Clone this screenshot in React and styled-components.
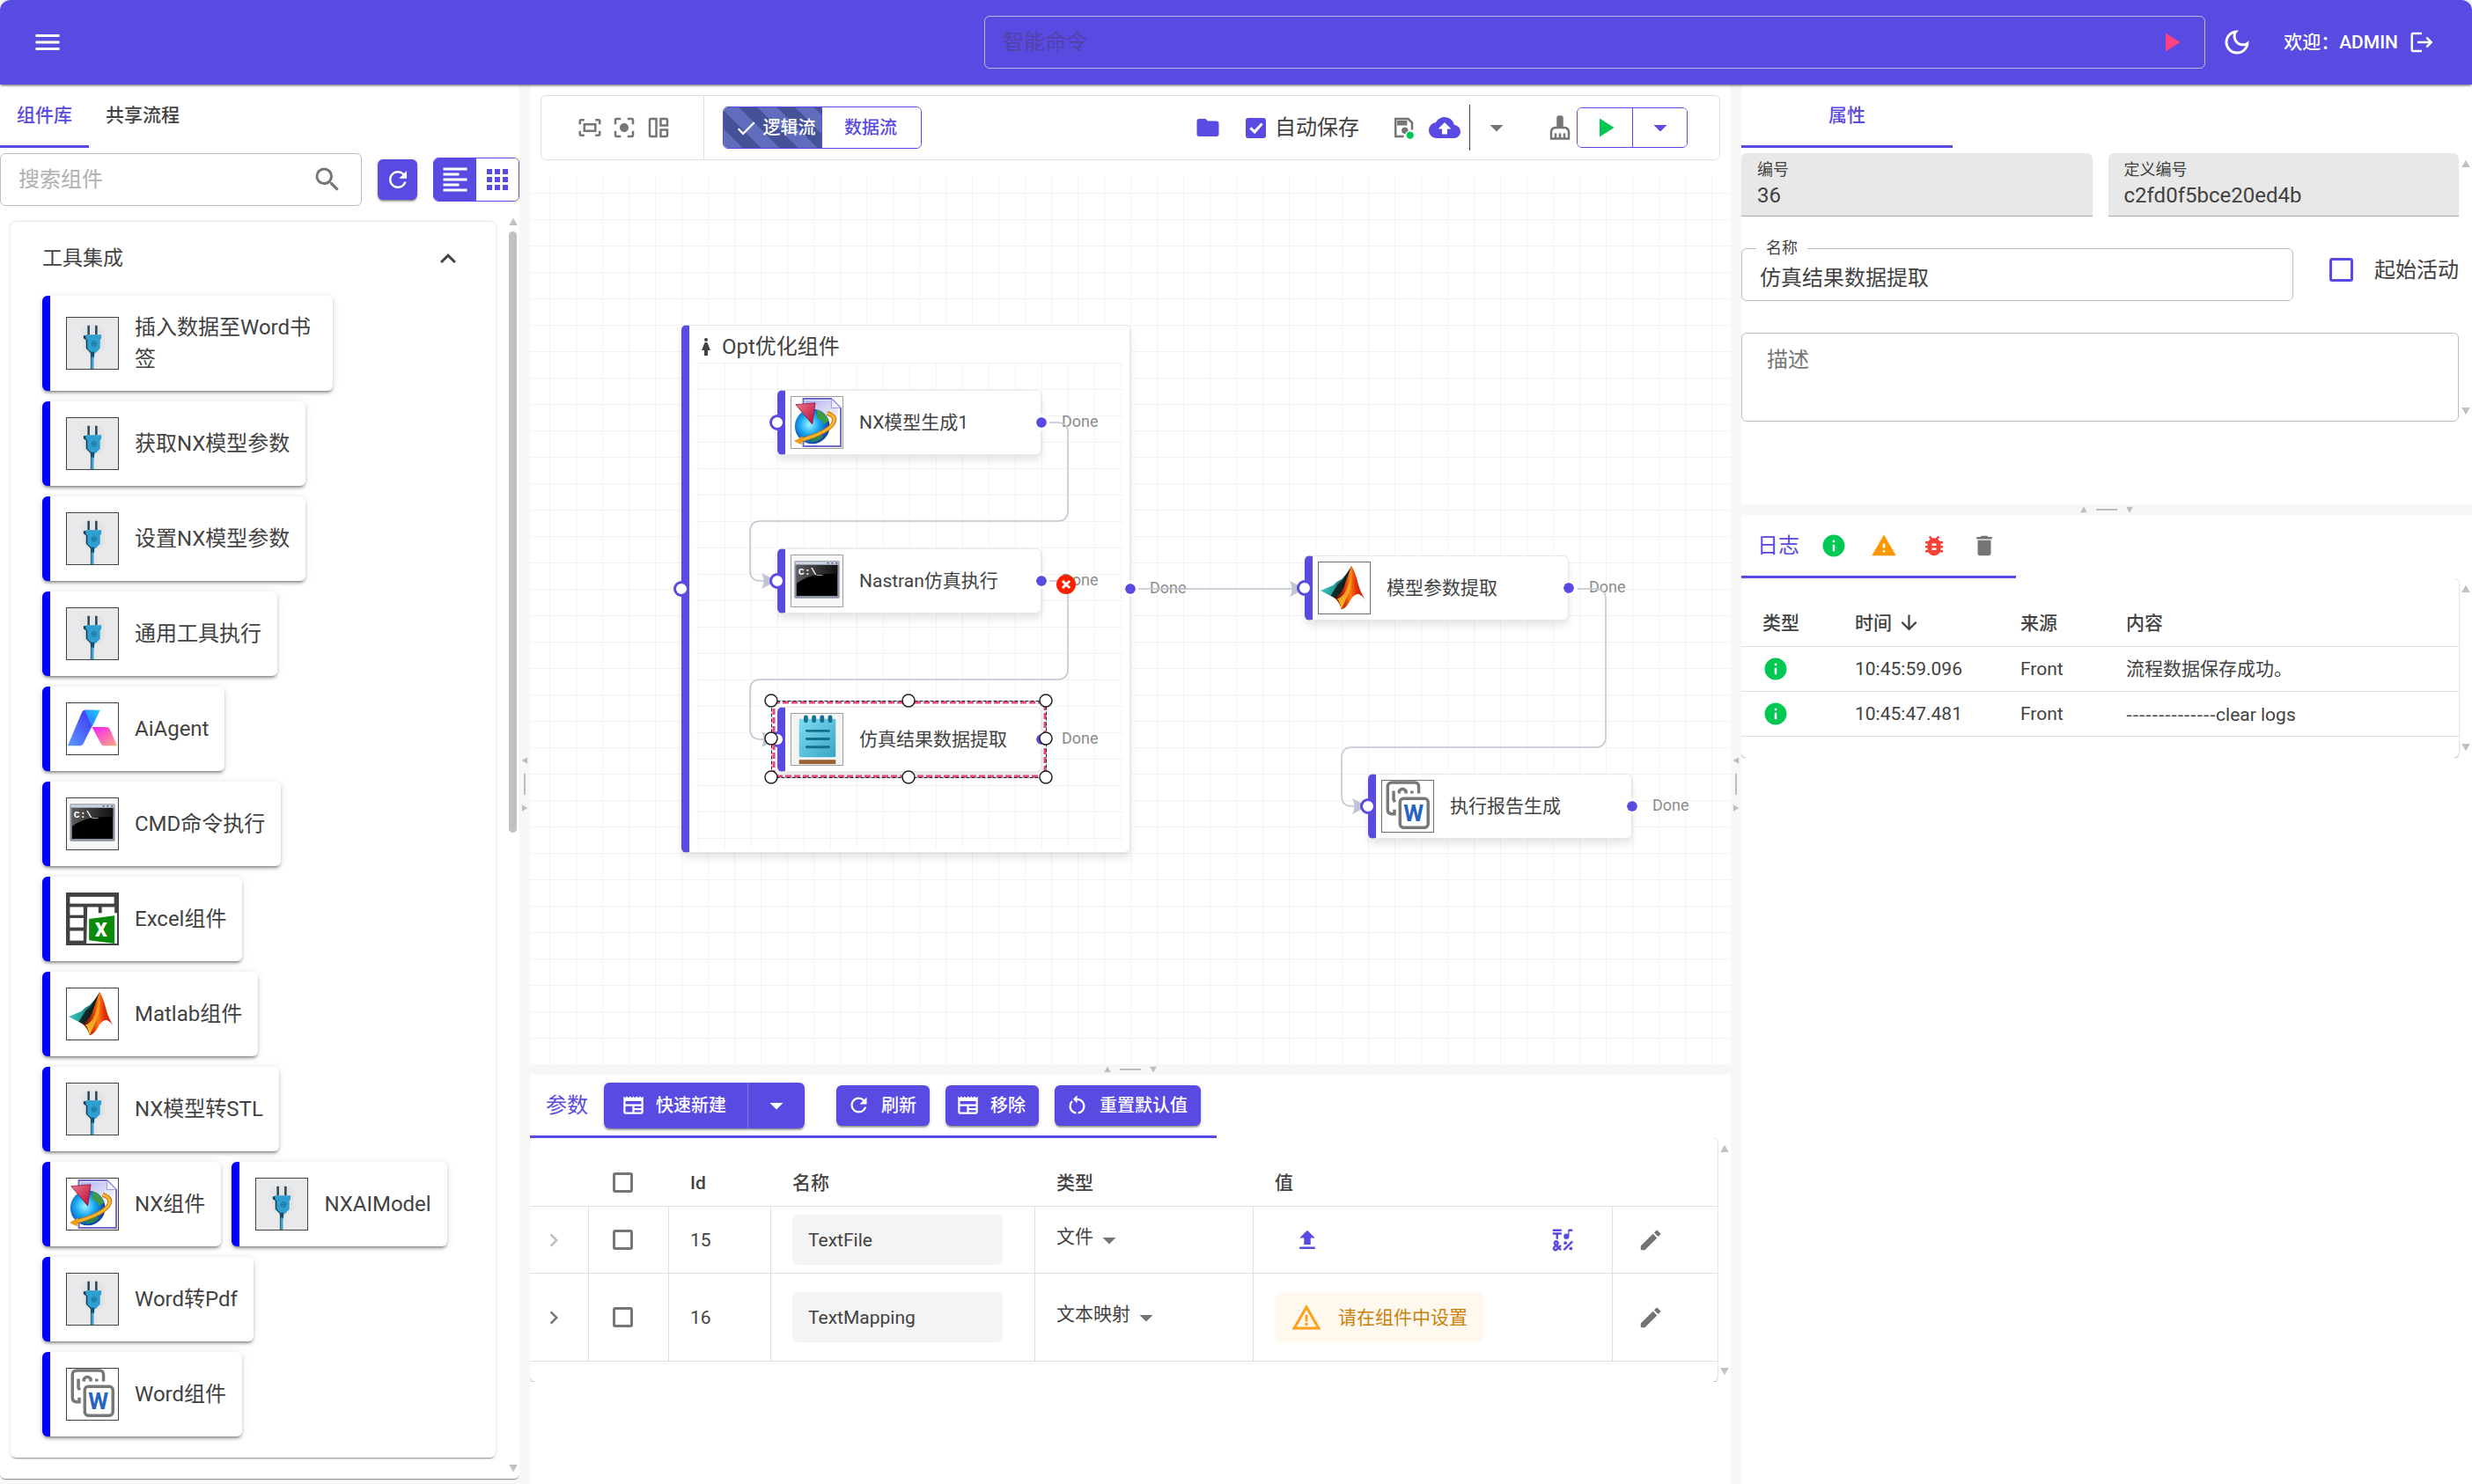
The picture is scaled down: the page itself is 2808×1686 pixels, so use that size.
import React, { useId, useState } from 'react';
import styled, { createGlobalStyle, css } from 'styled-components';
import {
  MdMenu, MdPlayArrow, MdOutlineDarkMode, MdLogout, MdSearch, MdRefresh, MdFormatAlignLeft, MdApps,
  MdExpandLess, MdOutlineFitScreen, MdCenterFocusStrong, MdOutlineAutoAwesomeMosaic, MdCheck, MdFolder,
  MdBackup, MdArrowDropDown, MdCleaningServices, MdNewspaper, MdRestartAlt, MdChevronRight, MdUpload,
  MdEmojiSymbols, MdEdit, MdWarningAmber, MdInfo, MdWarning, MdBugReport, MdDelete, MdArrowDownward,
  MdWoman,
} from 'react-icons/md';

const color = {
  primary: '#594ae2',
  secondary: '#ff4081',
  success: '#00c853',
  warning: '#ff9800',
  error: '#f44336',
  text: '#424242',
  icon: '#757575',
  muted: '#8c8c8c',
  line: '#e0e0e0',
  outline: '#bdbdbd',
  ground: '#f7f7f7',
  edge: '#bfc5d2',
};

const raised = '0 4px 2px -3px rgba(0,0,0,.3), 0 3px 3px rgba(0,0,0,.2), 0 1px 8px rgba(0,0,0,.12)';
const lifted = '0 3px 2px -2px rgba(0,0,0,.3), 0 2px 2px rgba(0,0,0,.2), 0 1px 5px rgba(0,0,0,.12)';

const GlobalStyle = createGlobalStyle`
  *, *::before, *::after { box-sizing: border-box; }
  body {
    margin: 0;
    background: ${color.ground};
    color: ${color.text};
    font-family: Roboto, "Noto Sans CJK SC", sans-serif;
    font-size: 21px;
    line-height: 30px;
  }
  button, input, select, textarea { font: inherit; color: inherit; margin: 0; }
  svg { display: block; flex: none; }
`;

/* ---------- shell ---------- */

const Shell = styled.div`
  display: flex;
  flex-direction: column;
  height: 100vh;
`;

const Header = styled.header`
  position: relative;
  z-index: 2;
  display: flex;
  align-items: center;
  height: 96px;
  flex: none;
  padding: 0 42px 0 36px;
  border-radius: 12px 12px 0 0;
  background: ${color.primary};
  color: #fff;
  box-shadow: ${lifted};
`;

const IconButton = styled.button`
  display: inline-flex;
  align-items: center;
  justify-content: center;
  padding: 0;
  border: 0;
  background: none;
  color: ${(p) => p.$color || 'inherit'};
  vertical-align: middle;
  cursor: pointer;
`;

const CommandBox = styled.div`
  display: flex;
  align-items: center;
  width: 1387px;
  max-width: 60%;
  height: 60px;
  margin: 0 18px 0 auto;
  padding: 0 20px;
  border: 1px solid #bdb7ea;
  border-radius: 6px;
`;

const PlainInput = styled.input`
  flex: 1;
  min-width: 0;
  height: 36px;
  padding: 0;
  border: 0;
  outline: 0;
  background: none;
  font-size: 24px;
  &::placeholder {
    color: ${(p) => p.$hint};
    opacity: 1;
  }
`;

const Account = styled.button`
  display: flex;
  align-items: center;
  gap: 12px;
  margin-left: 35px;
  padding: 0;
  border: 0;
  background: none;
  color: #fff;
  font-weight: 500;
  cursor: pointer;
`;

const Body = styled.main`
  flex: 1;
  min-height: 0;
  display: grid;
  grid-template-columns: minmax(0, 590fr) 12px minmax(0, 1364fr) 12px minmax(0, 830fr);
`;

const Column = styled.div`
  display: grid;
  min-height: 0;
  grid-template-rows: minmax(0, ${(p) => p.$top}fr) 12px minmax(0, ${(p) => p.$bottom}fr);
`;

const Pane = styled.section`
  display: flex;
  flex-direction: column;
  min-width: 0;
  min-height: 0;
  overflow: hidden;
  background: #fff;
`;

const SplitBar = styled.div`
  display: flex;
  flex-direction: ${(p) => (p.$vertical ? 'column' : 'row')};
  align-items: center;
  justify-content: center;
  gap: ${(p) => (p.$vertical ? 11 : 10)}px;
  background: ${color.ground};
  i {
    width: ${(p) => (p.$vertical ? 2 : 24)}px;
    height: ${(p) => (p.$vertical ? 24 : 2)}px;
    background: #bdbdbd;
  }
`;

const Triangle = ({ turn = 0, size = 8, fill = '#bdbdbd' }) => (
  <svg width={size} height={size} viewBox="0 0 8 8" aria-hidden="true">
    <path d="M4 .6 7.8 7.2H.2z" fill={fill} transform={`rotate(${turn} 4 4)`} />
  </svg>
);

const Splitter = ({ vertical }) => (
  <SplitBar $vertical={vertical} role="separator" aria-orientation={vertical ? 'vertical' : 'horizontal'}>
    <Triangle turn={vertical ? -90 : 0} />
    <i />
    <Triangle turn={vertical ? 90 : 180} />
  </SplitBar>
);

const ScrollRail = styled.div`
  display: flex;
  flex-direction: column;
  align-items: center;
  justify-content: space-between;
  flex: none;
  width: 15px;
  padding: 7px 0;
`;

const ScrollTrack = styled.div`
  flex: 1;
  width: 9px;
  margin: 6px 0;
`;

const ScrollThumb = styled.div`
  height: ${(p) => p.$share}%;
  border-radius: 5px;
  background: #c1c1c1;
`;

const Scrollbar = ({ share = 0 }) => (
  <ScrollRail aria-hidden="true">
    <Triangle size={10} fill="#c1c1c1" />
    <ScrollTrack>{share > 0 && <ScrollThumb $share={share} />}</ScrollTrack>
    <Triangle size={10} fill="#c1c1c1" turn={180} />
  </ScrollRail>
);

const TabBar = styled.div`
  display: flex;
  flex: none;
`;

const Tab = styled.button`
  height: 72px;
  min-width: ${(p) => p.$min || 0}px;
  padding: 0 19px;
  border: 0;
  border-bottom: 3px solid ${(p) => (p.$active ? color.primary : 'transparent')};
  background: none;
  color: ${(p) => (p.$active ? color.primary : color.text)};
  font-weight: 500;
  cursor: pointer;
`;

/* ---------- pictures of the components ---------- */

const Plug = () => (
  <>
    <rect width="60" height="60" fill="#e9e9eb" />
    <path d="M16 14q12-12 28 0v22q-10 12-24 2z" fill="#dfdfe4" opacity=".7" />
    <path d="M25.5 9v11M34.5 9v11" stroke="#2a4654" strokeWidth="2.6" />
    <path d="M19.5 21h19l-2 3v12l-5 5h-4l-5-5V26l-3-2z" fill="#0e3a50" />
    <path d="M22 20h18.500v4l-1.500 2v10l-5 5h-5l-5-5V26l-2-2z" fill="#2f9fd0" />
    <circle cx="32" cy="30.500" r="3" fill="none" stroke="#1a6f97" />
    <path d="M30 30.500h4M32 28.500v4" stroke="#1a6f97" />
    <path d="M27.500 40h5l-.5 7h-4z" fill="#14506d" />
    <path d="M30 46v14" stroke="#3aa0cb" strokeWidth="3" />
    <path d="M28.300 46v14" stroke="#1c566f" strokeWidth="1" />
  </>
);

const Agent = ({ id }) => (
  <>
    <defs>
      <linearGradient id={`${id}a`} x1="1" y1="0" x2="0" y2="1">
        <stop offset="0" stopColor="#3d2df5" />
        <stop offset="1" stopColor="#5a9bff" />
      </linearGradient>
      <linearGradient id={`${id}b`} x1="0" y1="1" x2="1" y2="0">
        <stop offset="0" stopColor="#2a6bff" />
        <stop offset="1" stopColor="#20c8ff" />
      </linearGradient>
      <linearGradient id={`${id}c`} x1="0" y1="0" x2="1" y2="1">
        <stop offset="0" stopColor="#f21cf5" />
        <stop offset="1" stopColor="#ffac80" />
      </linearGradient>
    </defs>
    <path d="M21 8h11l-3 20-9 18q-2 4-5 4H1L17 12q1.500-4 4-4z" fill={`url(#${id}a)`} />
    <path d="M21 8h18L29.500 28z" fill={`url(#${id}b)`} />
    <path d="M29.500 28H46q3.500 0 5 3.500L59 50H44q-3 0-4.500-3.500z" fill={`url(#${id}c)`} />
  </>
);

const Terminal = ({ id }) => (
  <>
    <defs>
      <linearGradient id={`${id}a`} x1="0" y1="0" x2="1" y2="0">
        <stop offset="0" stopColor="#5c5c5c" />
        <stop offset="1" stopColor="#111" />
      </linearGradient>
    </defs>
    <rect width="60" height="60" fill="#f7f7f7" />
    <rect x="3.500" y="6.500" width="53" height="44" rx="1.500" fill="#8d92a2" />
    <rect x="4.500" y="7.500" width="51" height="3" fill="#c9d3e2" />
    <path d="M42 9h2M47 9h2M52 9h2" stroke="#4c5570" strokeWidth="1.600" />
    <rect x="6" y="11.500" width="48" height="36" fill="#000" />
    <path d="M6 11.500h48V22Q22 20 6 33z" fill={`url(#${id}a)`} />
    <text x="8" y="23" fontFamily="Liberation Mono, monospace" fontWeight="700" fontSize="12" fill="#fff">C:\_</text>
  </>
);

const Sheet = () => (
  <>
    <rect width="60" height="60" fill="#424242" />
    <g fill="#fff">
      <rect x="3.500" y="4" width="52" height="8" />
      <rect x="3.500" y="16" width="16" height="9.500" />
      <rect x="3.500" y="29" width="16" height="11" />
      <rect x="3.500" y="44" width="16" height="11.500" />
      <path d="M24 16h13v7h4v-7h15v7h3v36H23z" />
    </g>
    <path d="M26 30l30-4v33l-30-4z" fill="#0b8a0b" />
    <text x="33" y="51" fontFamily="Roboto, sans-serif" fontWeight="900" fontSize="22" fill="#fff">X</text>
  </>
);

const Membrane = ({ id }) => (
  <>
    <defs>
      <linearGradient id={`${id}a`} x1="0" y1="0" x2="1" y2=".3">
        <stop offset="0" stopColor="#5fe0dc" />
        <stop offset=".6" stopColor="#1f9e97" />
        <stop offset="1" stopColor="#0a1a1c" />
      </linearGradient>
      <linearGradient id={`${id}b`} x1="0" y1="0" x2="1" y2="0">
        <stop offset="0" stopColor="#2a0b05" />
        <stop offset=".3" stopColor="#c92a08" />
        <stop offset=".5" stopColor="#ff7a10" />
        <stop offset=".68" stopColor="#e0320c" />
        <stop offset="1" stopColor="#c01212" />
      </linearGradient>
      <linearGradient id={`${id}c`} x1="0" y1="0" x2="0" y2="1">
        <stop offset="0" stopColor="#ffa21c" stopOpacity=".5" />
        <stop offset="1" stopColor="#ffc02a" />
      </linearGradient>
    </defs>
    <path d="M2 33l15-6q4-5 9.500-7Q33 14 38.500 4L30 34l-12 7.500z" fill={`url(#${id}a)`} />
    <path d="M22 26q8-5 14-18l-3 24-14 10-5-3z" fill="#11181a" opacity=".85" />
    <path d="M38.500 4Q43 12 46 24t10 22q-5-8-10-9-6 1-10 9.500-4 7.500-9.500 8.500-3-10-8.500-13.500Q28 37 32 22q3-8 6.500-18z" fill={`url(#${id}b)`} />
    <path d="M38.500 5q1.500 18-3 31l-9 19q-2-10-5-12 14-4 17-38z" fill={`url(#${id}c)`} />
  </>
);

const Globe = ({ id }) => (
  <>
    <defs>
      <radialGradient id={`${id}a`} cx=".42" cy=".45" r=".62">
        <stop offset="0" stopColor="#9ff4ff" />
        <stop offset=".45" stopColor="#1aa8f2" />
        <stop offset="1" stopColor="#0b2f9c" />
      </radialGradient>
      <linearGradient id={`${id}b`} x1="0" y1="0" x2="1" y2="1">
        <stop offset="0" stopColor="#f07a90" />
        <stop offset="1" stopColor="#b80830" />
      </linearGradient>
      <linearGradient id={`${id}c`} x1="0" y1="0" x2="1" y2="1">
        <stop offset="0" stopColor="#8d8de8" />
        <stop offset="1" stopColor="#fff" />
      </linearGradient>
    </defs>
    <path d="M14 2h33l11 11v45H14z" fill="#fff" stroke="#6c68c8" strokeWidth="2" />
    <path d="M16 4h30l9 10v16H16z" fill={`url(#${id}c)`} opacity=".7" />
    <path d="M47 2v11h11z" fill="#eef" stroke="#9a97dc" />
    <circle cx="24.500" cy="34.500" r="20.500" fill={`url(#${id}a)`} />
    <path d="M30 15q10 3 14 13l-6 4-3-5-5-2z" fill="#3f9a48" />
    <path d="M22 53q10 0 16-7l-5-1-9 4z" fill="#2c8650" />
    <path d="M42 19q10 3 8 10-4 12-40 22" fill="none" stroke="#c47508" strokeWidth="5" />
    <path d="M42 19q10 3 8 10-4 12-40 22" fill="none" stroke="#ffb52e" strokeWidth="3" />
    <path d="M3 52l10-6-1 10z" fill="#f09a18" />
    <path d="M5 9l23-2-3.500 25z" fill={`url(#${id}b)`} stroke="#8a1436" strokeWidth=".8" />
  </>
);

const Document = () => (
  <>
    <g fill="none" stroke="#787878" strokeWidth="3.600">
      <path d="M43 15V7q0-5-5-5H12Q6.500 2 6.500 7v27q0 5 5 5h3v-5" />
      <path d="M13.500 12v10l1.500 3M20 15v-3q4-5 8 0v3M35 12v3" />
      <rect x="21" y="21" width="33" height="34" rx="4" fill="#fff" />
    </g>
    <text x="25" y="48" fontFamily="Roboto, sans-serif" fontWeight="700" fontSize="27" fill="#2563c4">W</text>
  </>
);

const Notebook = ({ id }) => (
  <>
    <defs>
      <linearGradient id={`${id}a`} x1="0" y1="0" x2="1" y2="1">
        <stop offset="0" stopColor="#7fdcf2" />
        <stop offset="1" stopColor="#3aa6c4" />
      </linearGradient>
    </defs>
    <rect width="60" height="60" fill="#f4f4f4" />
    <rect x="9" y="6" width="43" height="45" rx="1.500" fill={`url(#${id}a)`} />
    <path d="M17 4v4M26.500 4v4M36 4v4M45.500 4v4" stroke="#14708f" strokeWidth="5" strokeLinecap="round" />
    <path d="M18 20h26M18 29.500h26M18 39h26" stroke="#14708f" strokeWidth="3" strokeLinecap="round" />
    <rect x="9" y="54" width="43" height="5" fill="#9a6233" />
  </>
);

const pictures = { plug: Plug, agent: Agent, terminal: Terminal, sheet: Sheet, membrane: Membrane, globe: Globe, document: Document, notebook: Notebook };

const Frame = styled.svg`
  width: 60px;
  height: 60px;
  border: 1px solid ${(p) => p.$edge || color.text};
  background: #fff;
`;

const Picture = ({ kind, edge }) => {
  const id = useId();
  const Drawing = pictures[kind];
  return (
    <Frame viewBox="0 0 60 60" $edge={edge} aria-hidden="true">
      <Drawing id={id} />
    </Frame>
  );
};

/* ---------- component library ---------- */

const LibraryWrap = styled.div`
  padding-bottom: 6px;
  min-height: 0;
  display: flex;
`;

const LibraryPane = styled(Pane)`
  flex: 1;
  overflow: visible;
  border-radius: 0 0 6px 6px;
  box-shadow: 0 2px 1px -1px rgba(0,0,0,.3), 0 1px 1px rgba(0,0,0,.2);
`;

const Filters = styled.div`
  display: flex;
  align-items: center;
  gap: 18px;
  padding: 6px 0;
`;

const SearchBox = styled.div`
  display: flex;
  align-items: center;
  flex: 1;
  min-width: 0;
  height: 60px;
  padding: 0 20px;
  border: 1px solid ${color.outline};
  border-radius: 6px;
  color: ${color.icon};
`;

const SquareButton = styled(IconButton)`
  width: 45px;
  height: 46px;
  border-radius: 6px;
  background: ${color.primary};
  color: #fff;
  box-shadow: ${lifted};
`;

const Toggle = styled.div`
  display: inline-flex;
  flex: none;
  overflow: hidden;
  border: 1px solid ${color.primary};
  border-radius: 6px;
`;

const ViewOption = styled(IconButton)`
  width: 48px;
  height: 48px;
  background: ${(p) => (p.$on ? color.primary : '#fff')};
  color: ${(p) => (p.$on ? '#fff' : color.primary)};
`;

const ScrollArea = styled.div`
  display: flex;
  flex: ${(p) => (p.$fill ? 1 : 'none')};
  min-height: 0;
`;

const LibraryContent = styled.div`
  flex: 1;
  min-width: 0;
  padding: 12px;
  overflow: hidden;
`;

const Group = styled.section`
  border-radius: 6px;
  background: #fff;
  box-shadow: 0 3px 2px -2px rgba(0,0,0,.4), 0 0 3px rgba(0,0,0,.2);
`;

const GroupHeader = styled.button`
  display: flex;
  align-items: center;
  justify-content: space-between;
  width: 100%;
  height: 84px;
  padding: 0 36px;
  border: 0;
  background: none;
  font-size: 23px;
  cursor: pointer;
`;

const Items = styled.ul`
  display: flex;
  flex-wrap: wrap;
  gap: 12px;
  margin: 0;
  padding: 0 42px 24px 36px;
  list-style: none;
`;

const Item = styled.li`
  display: flex;
  align-items: center;
  gap: 18px;
  max-width: 330px;
  min-height: 96px;
  padding: 18px;
  border-left: 9px solid #00f;
  border-radius: 6px;
  background: #fff;
  box-shadow: ${raised};
  font-size: 24px;
  line-height: 36px;
  cursor: grab;
`;

const library = [
  ['plug', '插入数据至Word书签'],
  ['plug', '获取NX模型参数'],
  ['plug', '设置NX模型参数'],
  ['plug', '通用工具执行'],
  ['agent', 'AiAgent'],
  ['terminal', 'CMD命令执行'],
  ['sheet', 'Excel组件'],
  ['membrane', 'Matlab组件'],
  ['plug', 'NX模型转STL'],
  ['globe', 'NX组件'],
  ['plug', 'NXAIModel'],
  ['plug', 'Word转Pdf'],
  ['document', 'Word组件'],
];

const Library = () => (
  <LibraryWrap>
    <LibraryPane>
      <TabBar role="tablist">
        <Tab role="tab" aria-selected="true" $active>组件库</Tab>
        <Tab role="tab" aria-selected="false">共享流程</Tab>
      </TabBar>
      <Filters>
        <SearchBox>
          <PlainInput type="search" placeholder="搜索组件" aria-label="搜索组件" $hint="#b0b0b0" />
          <MdSearch size={36} />
        </SearchBox>
        <SquareButton aria-label="刷新组件"><MdRefresh size={30} /></SquareButton>
        <Toggle>
          <ViewOption $on aria-label="列表" aria-pressed="true"><MdFormatAlignLeft size={36} /></ViewOption>
          <ViewOption aria-label="网格" aria-pressed="false"><MdApps size={36} /></ViewOption>
        </Toggle>
      </Filters>
      <ScrollArea $fill>
        <LibraryContent>
          <Group>
            <GroupHeader aria-expanded="true">工具集成<MdExpandLess size={36} /></GroupHeader>
            <Items>
              {library.map(([kind, name]) => (
                <Item key={name}><Picture kind={kind} /><span>{name}</span></Item>
              ))}
            </Items>
          </Group>
        </LibraryContent>
        <Scrollbar share={49} />
      </ScrollArea>
    </LibraryPane>
  </LibraryWrap>
);

/* ---------- flow editor ---------- */

const Toolbar = styled.div`
  display: flex;
  align-items: center;
  flex: none;
  height: 74px;
  margin: 12px 12px 18px;
  padding: 0 36px 0 40px;
  border: 1px solid ${color.line};
  border-radius: 6px;
  color: ${color.icon};
`;

const ToolGroup = styled.div`
  display: flex;
  align-items: center;
  align-self: stretch;
  gap: 9px;
  padding-right: 36px;
  border-right: 1px solid ${color.line};
`;

const FlowToggle = styled(Toggle)`
  margin: 0 auto 0 21px;
`;

const FlowOption = styled.button`
  display: flex;
  align-items: center;
  justify-content: center;
  gap: 6px;
  width: 112px;
  height: 46px;
  padding: 0 2px 0 0;
  border: 0;
  color: ${(p) => (p.$on ? '#fff' : color.primary)};
  font-size: 20px;
  font-weight: 500;
  white-space: nowrap;
  cursor: pointer;
  ${(p) => (p.$on
    ? css`
      padding: 0 0 0 5px;
      background: repeating-linear-gradient(45deg, #606dbc, #606dbc 15px, #465298 15px, #465298 30px);
      border-right: 1px solid ${color.primary};
    `
    : css`background: #fff;`)}
`;

const CheckLabel = styled.label`
  display: flex;
  align-items: center;
  gap: ${(p) => p.$gap}px;
  color: ${color.text};
  font-size: 24px;
  line-height: 36px;
  white-space: nowrap;
`;

const Checkbox = styled.input.attrs({ type: 'checkbox' })`
  appearance: none;
  display: grid;
  place-items: center;
  flex: none;
  width: ${(p) => p.$size || 23}px;
  height: ${(p) => p.$size || 23}px;
  border: 3px solid ${(p) => p.$color || color.icon};
  border-radius: 3px;
  cursor: pointer;
  &:checked {
    background: ${(p) => p.$color || color.icon};
  }
  &:checked::after {
    content: "";
    width: 8px;
    height: 14px;
    margin-bottom: 4px;
    border: solid #fff;
    border-width: 0 3px 3px 0;
    transform: rotate(42deg);
  }
`;

const ToolActions = styled.div`
  display: flex;
  align-items: center;
  gap: ${(p) => p.$gap}px;
  margin-left: ${(p) => p.$left}px;
`;

const Rule = styled.span`
  width: 1px;
  height: 52px;
  margin: 0 12px 0 10px;
  background: ${color.text};
`;

const RunOption = styled(IconButton)`
  width: 62px;
  height: 44px;
  background: #fff;
  & + & {
    border-left: 1px solid ${color.primary};
  }
`;

const SaveState = () => (
  <svg width="30" height="30" viewBox="0 0 24 24" aria-hidden="true">
    <path d="M12.500 20H5V4h11.500L20 7.500V14" fill="none" stroke="currentColor" strokeWidth="2" />
    <path d="M6.500 5.500h9V10h-9z" fill="currentColor" />
    <path d="M12 12a3 3 0 1 1 1.500 5.600A3 3 0 0 1 12 12z" fill="currentColor" />
    <circle cx="18" cy="18.700" r="4" fill="#fff" />
    <circle cx="18.200" cy="18.900" r="3.300" fill={color.success} />
  </svg>
);

const Canvas = styled.div`
  position: relative;
  flex: 1;
  min-height: 0;
  overflow: hidden;
  background-color: #fff;
  background-position: 22px 19px;
  background-size: 30px 30px;
  background-image:
    linear-gradient(to right, #f3f3f3 1px, transparent 1px),
    linear-gradient(to bottom, #f3f3f3 1px, transparent 1px);
`;

const Edges = styled.svg`
  position: absolute;
  inset: 0;
  width: 100%;
  height: 100%;
  overflow: visible;
  pointer-events: none;
`;

const nodeCard = css`
  position: absolute;
  left: ${(p) => p.$x}px;
  top: ${(p) => p.$y}px;
  border: 1px solid #e8e8e8;
  border-left: 9px solid ${color.primary};
  border-radius: 6px;
  background: #fff;
  box-shadow: 0 6px 9px rgba(0,0,0,.1);
`;

const Container = styled.div`
  ${nodeCard}
  display: flex;
  flex-direction: column;
  width: 510px;
  height: 600px;
  padding: 0 6px 4px 7px;
`;

const ContainerTitle = styled.div`
  display: flex;
  align-items: center;
  gap: 6px;
  height: 42px;
  padding: 5px 0 0;
  font-size: 24px;
`;

const ContainerGrid = styled.div`
  flex: 1;
  background-position: 3px 0;
  background-size: 30px 30px;
  background-image:
    linear-gradient(to right, #f3f3f3 1px, transparent 1px),
    linear-gradient(to bottom, #f3f3f3 1px, transparent 1px);
`;

const Node = styled.div`
  ${nodeCard}
  display: flex;
  align-items: center;
  gap: 18px;
  width: 300px;
  height: 74px;
  padding-left: 6px;
  white-space: nowrap;
`;

const InPort = styled.span`
  position: absolute;
  left: ${(p) => p.$x - 9}px;
  top: ${(p) => p.$y - 9}px;
  width: 18px;
  height: 18px;
  border: 3px solid ${color.primary};
  border-radius: 50%;
  background: #fff;
`;

const OutPort = styled(InPort)`
  border-color: #fff;
  background: ${color.primary};
  background-clip: padding-box;
`;

const PortLabel = styled.span`
  position: absolute;
  left: ${(p) => p.$x + 23}px;
  top: ${(p) => p.$y - 16}px;
  color: ${color.muted};
  font-size: 18px;
`;

const RemoveEdge = styled.button`
  position: absolute;
  left: ${(p) => p.$x - 11}px;
  top: ${(p) => p.$y - 11}px;
  padding: 0;
  border: 0;
  background: none;
`;

const nodes = [
  { kind: 'globe', name: 'NX模型生成1', x: 281, y: 243, edge: '#9e9e9e' },
  { kind: 'terminal', name: 'Nastran仿真执行', x: 281, y: 423, edge: '#9e9e9e' },
  { kind: 'notebook', name: '仿真结果数据提取', x: 281, y: 603, edge: '#9e9e9e' },
  { kind: 'membrane', name: '模型参数提取', x: 880, y: 431, edge: '#6e6e6e' },
  { kind: 'document', name: '执行报告生成', x: 952, y: 679, edge: '#6e6e6e' },
];

const arrow = (x, y) => `M${x} ${y}l-18-9q5 9 0 18z`;

const handles = [274, 430, 586].flatMap((x) => [596, 639, 683].map((y) => [x, y]))
  .filter(([x, y]) => !(x === 430 && y === 639));

const FlowCanvas = () => (
  <Canvas>
    <Container $x={172} $y={169}>
      <ContainerTitle><MdWoman size={24} />Opt优化组件</ContainerTitle>
      <ContainerGrid />
    </Container>
    {nodes.map((n) => (
      <Node key={n.name} $x={n.x} $y={n.y}><Picture kind={n.kind} edge={n.edge} />{n.name}</Node>
    ))}
    {nodes.map((n) => (
      <PortLabel key={n.name} $x={n.x + 300} $y={n.y + 37}>Done</PortLabel>
    ))}
    <PortLabel $x={681} $y={469}>Done</PortLabel>
    <Edges aria-hidden="true">
      <g fill="none" stroke={color.edge} strokeWidth="1.5">
        <path d="M590 280h9q12 0 12 12v88q0 12-12 12H262q-12 0-12 12v44q0 12 12 12h8" />
        <path d="M590 460h9q12 0 12 12v88q0 12-12 12H262q-12 0-12 12v44q0 12 12 12h8" />
        <path d="M691 469h176" />
        <path d="M1190 469h20q12 0 12 12v156q0 12-12 12H934q-12 0-12 12v43q0 12 12 12h8" />
      </g>
      <path d={`${arrow(281, 460)}${arrow(281, 640)}${arrow(881, 469)}${arrow(952, 716)}`} fill={color.edge} />
    </Edges>
    <InPort $x={172} $y={469} />
    <OutPort $x={682} $y={469} />
    {nodes.map((n) => (
      <React.Fragment key={n.name}>
        <InPort $x={n.x} $y={n.y + 37} />
        <OutPort $x={n.x + 300} $y={n.y + 37} />
      </React.Fragment>
    ))}
    <RemoveEdge $x={609} $y={464} aria-label="删除连线">
      <svg width="22" height="22" viewBox="0 0 22 22">
        <circle cx="11" cy="11" r="11" fill="#ff1f00" />
        <path d="m7 7 8 8m0-8-8 8" stroke="#fff" strokeWidth="3" />
      </svg>
    </RemoveEdge>
    <Edges aria-hidden="true">
      <rect x="277" y="598" width="308" height="84" fill="none" stroke="#e8467c" strokeWidth="3" strokeDasharray="7 3" />
      <rect x="274.500" y="596.500" width="312" height="87" fill="none" stroke="#222" strokeDasharray="4 2" />
      {handles.map(([x, y]) => (
        <circle key={`${x}-${y}`} cx={x} cy={y} r="7" fill="#fff" stroke="#222" strokeWidth="1.5" />
      ))}
    </Edges>
  </Canvas>
);

const FlowEditor = () => {
  const [autoSave, setAutoSave] = useState(true);
  return (
    <Pane>
      <Toolbar>
        <ToolGroup>
          <IconButton aria-label="适应画布"><MdOutlineFitScreen size={30} /></IconButton>
          <IconButton aria-label="居中"><MdCenterFocusStrong size={30} /></IconButton>
          <IconButton aria-label="自动布局"><MdOutlineAutoAwesomeMosaic size={30} /></IconButton>
        </ToolGroup>
        <FlowToggle>
          <FlowOption $on aria-pressed="true"><MdCheck size={27} />逻辑流</FlowOption>
          <FlowOption aria-pressed="false">数据流</FlowOption>
        </FlowToggle>
        <IconButton $color={color.primary} aria-label="打开文件夹"><MdFolder size={30} /></IconButton>
        <ToolActions $gap={0} $left={28}>
          <CheckLabel $gap={10}>
            <Checkbox $color={color.primary} checked={autoSave} onChange={(e) => setAutoSave(e.target.checked)} />
            自动保存
          </CheckLabel>
        </ToolActions>
        <ToolActions $gap={14} $left={35}>
          <IconButton aria-label="保存"><SaveState /></IconButton>
          <IconButton $color={color.primary} aria-label="上传"><MdBackup size={36} /></IconButton>
        </ToolActions>
        <Rule />
        <IconButton aria-label="更多"><MdArrowDropDown size={36} /></IconButton>
        <ToolActions $gap={4} $left={39}>
          <IconButton aria-label="清理"><MdCleaningServices size={30} /></IconButton>
          <Toggle>
            <RunOption $color={color.success} aria-label="运行"><MdPlayArrow size={36} /></RunOption>
            <RunOption $color={color.primary} aria-label="运行选项"><MdArrowDropDown size={36} /></RunOption>
          </Toggle>
        </ToolActions>
      </Toolbar>
      <FlowCanvas />
    </Pane>
  );
};

/* ---------- parameters ---------- */

const ToolTab = styled.div`
  display: flex;
  align-items: center;
  align-self: flex-start;
  height: 72px;
  padding: 0 18px;
  border-bottom: 3px solid ${color.primary};
`;

const TabTitle = styled.h2`
  margin: 0;
  color: ${color.primary};
  font-size: 24px;
  font-weight: 400;
`;

const FilledButton = styled.button`
  display: flex;
  align-items: center;
  gap: 12px;
  height: 46px;
  margin-left: 18px;
  padding: 0 15px 0 12px;
  border: 0;
  border-radius: 6px;
  background: ${color.primary};
  color: #fff;
  font-size: 20px;
  font-weight: 500;
  box-shadow: ${lifted};
  cursor: pointer;
`;

const SplitButton = styled.div`
  display: flex;
  margin: 0 18px;
  border-radius: 6px;
  box-shadow: ${lifted};
  ${FilledButton} {
    height: 52px;
    margin: 0;
    box-shadow: none;
  }
  ${FilledButton}:first-child {
    padding: 0 24px 0 20px;
    border-right: 1px solid #8177ea;
    border-radius: 6px 0 0 6px;
  }
  ${FilledButton}:last-child {
    padding: 0 14px;
    border-radius: 0 6px 6px 0;
  }
`;

const Paper = styled.div`
  flex: 1;
  min-width: 0;
  padding: 24px 0 ${(p) => p.$foot}px;
  border-radius: 6px;
  box-shadow: 0 2px 2px -1px rgba(0,0,0,.4), 0 0 2px rgba(0,0,0,.3);
`;

const Clip = styled(ScrollArea)`
  overflow: hidden;
`;

const Table = styled.table`
  width: 100%;
  table-layout: fixed;
  border-collapse: separate;
  border-spacing: 0;
  text-align: left;
`;

const Th = styled.th`
  height: 54px;
  padding: 0 0 0 24px;
  border-bottom: 1px solid ${color.line};
  font-weight: 500;
`;

const Td = styled.td`
  height: ${(p) => p.$height}px;
  padding: 0 0 0 ${(p) => (p.$left === undefined ? 24 : p.$left)}px;
  border-bottom: 1px solid ${color.line};
  ${(p) => p.$ruled && css`border-right: 1px solid ${color.line};`}
`;

const Cluster = styled.span`
  display: flex;
  align-items: center;
  gap: ${(p) => p.$gap || 0}px;
`;

const NameInput = styled.input`
  width: calc(100% - 36px);
  max-width: 239px;
  height: 57px;
  padding: 0 18px;
  border: 0;
  border-radius: 6px;
  background: #f4f4f4;
`;

const TypePicker = styled.span`
  display: inline-grid;
  align-items: center;
  margin-bottom: 8px;
  color: ${color.icon};
  > * { grid-area: 1 / 1; }
  svg {
    justify-self: end;
    margin-top: 9px;
    pointer-events: none;
  }
`;

const TypeSelect = styled.select`
  appearance: none;
  field-sizing: content;
  height: 36px;
  padding: 0 36px 0 0;
  border: 0;
  background: none;
  color: ${color.text};
`;

const ValueActions = styled.div`
  display: flex;
  justify-content: space-between;
  padding: 0 41px 0 22px;
`;

const Alert = styled.div`
  display: inline-flex;
  align-items: center;
  gap: 18px;
  height: 57px;
  padding: 0 18px;
  border-radius: 6px;
  background: #fff8ee;
  color: #c8820c;
  vertical-align: middle;
  svg { color: #ffa01c; }
`;

const TableCheck = styled(Checkbox)`
  margin-left: 3px;
`;

const parameters = [
  { id: 15, name: 'TextFile', type: '文件', height: 76, leaf: true },
  { id: 16, name: 'TextMapping', type: '文本映射', height: 100, leaf: false },
];

const Parameters = () => (
  <Pane>
    <ToolTab>
      <TabTitle>参数</TabTitle>
      <SplitButton>
        <FilledButton><MdNewspaper size={27} />快速新建</FilledButton>
        <FilledButton aria-label="新建选项"><MdArrowDropDown size={36} /></FilledButton>
      </SplitButton>
      <FilledButton><MdRefresh size={27} />刷新</FilledButton>
      <FilledButton><MdNewspaper size={27} />移除</FilledButton>
      <FilledButton><MdRestartAlt size={27} />重置默认值</FilledButton>
    </ToolTab>
    <Clip>
      <Paper $foot={23}>
        <Table>
          <colgroup>
            <col width="67" /><col width="91" /><col width="116" /><col width="300" />
            <col width="248" /><col /><col width="119" />
          </colgroup>
          <thead>
            <tr>
              <Th aria-label="展开" />
              <Th><TableCheck aria-label="全选" /></Th>
              <Th>Id</Th><Th>名称</Th><Th>类型</Th><Th>值</Th>
              <Th aria-label="操作" />
            </tr>
          </thead>
          <tbody>
            {parameters.map((row) => (
              <tr key={row.id}>
                <Td $ruled $left={12} $height={row.height}>
                  <IconButton $color={row.leaf ? '#bdbdbd' : color.icon} disabled={row.leaf} aria-label={`展开 ${row.name}`}>
                    <MdChevronRight size={30} />
                  </IconButton>
                </Td>
                <Td $ruled><TableCheck aria-label={`选择 ${row.name}`} /></Td>
                <Td $ruled>{row.id}</Td>
                <Td $ruled><NameInput defaultValue={row.name} aria-label={`名称 ${row.id}`} /></Td>
                <Td $ruled>
                  <TypePicker>
                    <TypeSelect aria-label={`类型 ${row.id}`}><option>{row.type}</option></TypeSelect>
                    <MdArrowDropDown size={36} />
                  </TypePicker>
                </Td>
                <Td $ruled>
                  {row.leaf ? (
                    <ValueActions>
                      <IconButton $color={color.primary} aria-label="上传文件"><MdUpload size={30} /></IconButton>
                      <IconButton $color={color.primary} aria-label="插入表达式"><MdEmojiSymbols size={30} /></IconButton>
                    </ValueActions>
                  ) : (
                    <Alert role="alert"><MdWarningAmber size={36} />请在组件中设置</Alert>
                  )}
                </Td>
                <Td $left={28}>
                  <IconButton $color={color.icon} aria-label={`编辑 ${row.name}`}><MdEdit size={30} /></IconButton>
                </Td>
              </tr>
            ))}
          </tbody>
        </Table>
      </Paper>
      <Scrollbar />
    </Clip>
  </Pane>
);

/* ---------- properties ---------- */

const Form = styled.form`
  display: flex;
  flex-direction: column;
  flex: 1;
  min-width: 0;
`;

const FieldRow = styled.div`
  display: flex;
  align-items: center;
  gap: ${(p) => p.$gap}px;
  margin-bottom: ${(p) => p.$after}px;
`;

const FilledField = styled.label`
  display: flex;
  flex-direction: column;
  flex: 1;
  min-width: 0;
  height: 72px;
  padding: 8px 18px 0;
  border-bottom: 1px solid #a8a8a8;
  border-radius: 6px 6px 0 0;
  background: #e8e8e8;
  font-size: 18px;
  line-height: 22px;
`;

const FieldInput = styled.input`
  width: 100%;
  height: 36px;
  padding: 0;
  border: 0;
  outline: 0;
  background: none;
  font-size: 24px;
`;

const OutlinedField = styled.fieldset`
  flex: 1;
  min-width: 0;
  height: 71px;
  margin: 0;
  padding: 2px 20px 0;
  border: 1px solid ${color.outline};
  border-radius: 6px;
  legend {
    margin-left: -4px;
    padding: 0 11px;
    font-size: 18px;
    line-height: 22px;
  }
`;

const Description = styled.textarea`
  display: block;
  width: 100%;
  height: 101px;
  padding: 12px 28px;
  border: 1px solid ${color.outline};
  border-radius: 6px;
  resize: none;
  font-size: 24px;
  line-height: 36px;
  &::placeholder {
    color: ${color.icon};
    opacity: 1;
  }
`;

const FormArea = styled(ScrollArea)`
  padding-top: 6px;
`;

const Properties = () => (
  <Pane>
    <TabBar role="tablist">
      <Tab role="tab" aria-selected="true" $active $min={240}>属性</Tab>
    </TabBar>
    <FormArea>
      <Form>
        <FieldRow $gap={18} $after={25}>
          <FilledField>编号<FieldInput readOnly value="36" /></FilledField>
          <FilledField>定义编号<FieldInput readOnly value="c2fd0f5bce20ed4b" /></FilledField>
        </FieldRow>
        <FieldRow $gap={41} $after={36}>
          <OutlinedField>
            <legend><label htmlFor="activity-name">名称</label></legend>
            <FieldInput id="activity-name" defaultValue="仿真结果数据提取" />
          </OutlinedField>
          <CheckLabel $gap={24}><Checkbox $size={27} $color={color.primary} />起始活动</CheckLabel>
        </FieldRow>
        <Description placeholder="描述" aria-label="描述" />
      </Form>
      <Scrollbar />
    </FormArea>
  </Pane>
);

/* ---------- log ---------- */

const LogTools = styled.div`
  display: flex;
  align-items: center;
  gap: 27px;
  margin-left: 24px;
`;

const LogTab = styled(ToolTab)`
  padding: 0 21px 0 18px;
`;

const Dashes = styled.span`
  font-family: "Noto Sans CJK SC", sans-serif;
`;

const logs = [
  { time: '10:45:59.096', source: 'Front', content: '流程数据保存成功。' },
  { time: '10:45:47.481', source: 'Front', dashes: '--------------', content: 'clear logs' },
];

const Log = () => (
  <Pane>
    <LogTab>
      <TabTitle>日志</TabTitle>
      <LogTools>
        <IconButton $color={color.success} aria-label="信息"><MdInfo size={30} /></IconButton>
        <IconButton $color={color.warning} aria-label="警告"><MdWarning size={30} /></IconButton>
        <IconButton $color={color.error} aria-label="错误"><MdBugReport size={30} /></IconButton>
        <IconButton $color={color.icon} aria-label="清空"><MdDelete size={30} /></IconButton>
      </LogTools>
    </LogTab>
    <Clip>
      <Paper $foot={24}>
        <Table>
          <colgroup><col width="105" /><col width="188" /><col width="120" /><col /></colgroup>
          <thead>
            <tr>
              <Th>类型</Th>
              <Th aria-sort="descending"><Cluster $gap={6}>时间<MdArrowDownward size={27} /></Cluster></Th>
              <Th>来源</Th>
              <Th>内容</Th>
            </tr>
          </thead>
          <tbody>
            {logs.map((entry) => (
              <tr key={entry.time}>
                <Td $height={51}><Cluster><MdInfo size={30} color={color.success} title="信息" /></Cluster></Td>
                <Td>{entry.time}</Td>
                <Td>{entry.source}</Td>
                <Td>{entry.dashes && <Dashes>{entry.dashes}</Dashes>}{entry.content}</Td>
              </tr>
            ))}
          </tbody>
        </Table>
      </Paper>
      <Scrollbar />
    </Clip>
  </Pane>
);

export default function App() {
  return (
    <>
      <GlobalStyle />
      <Shell>
        <Header>
          <IconButton aria-label="菜单"><MdMenu size={36} /></IconButton>
          <CommandBox>
            <PlainInput placeholder="智能命令" aria-label="智能命令" $hint="#5142a8" />
            <IconButton $color={color.secondary} aria-label="执行命令"><MdPlayArrow size={36} /></IconButton>
          </CommandBox>
          <IconButton aria-label="深色模式"><MdOutlineDarkMode size={36} /></IconButton>
          <Account>欢迎：ADMIN<MdLogout size={30} /></Account>
        </Header>
        <Body>
          <Library />
          <Splitter vertical />
          <Column $top={1113} $bottom={465}>
            <FlowEditor />
            <Splitter />
            <Parameters />
          </Column>
          <Splitter vertical />
          <Column $top={477} $bottom={1101}>
            <Properties />
            <Splitter />
            <Log />
          </Column>
        </Body>
      </Shell>
    </>
  );
}
